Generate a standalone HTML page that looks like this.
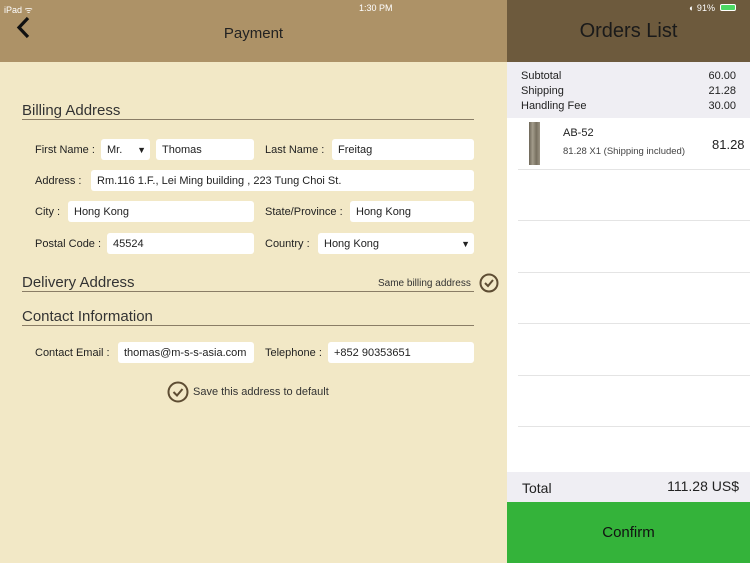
<!DOCTYPE html>
<html><head><meta charset="utf-8"><style>
*{margin:0;padding:0;box-sizing:border-box}
body{width:750px;height:563px;overflow:hidden;position:relative;font-family:"Liberation Sans",sans-serif;background:#f2e8c6;color:#222}
.a{position:absolute}
.lh{left:0;top:0;width:507px;height:62px;background:#ad9267}
.rh{left:507px;top:0;width:243px;height:62px;background:#6d5a3d}
.sb{font-size:9px;color:#fff}
.inp{position:absolute;background:#fff;border-radius:3px;height:21px;font-size:11px;line-height:22px;padding-left:6px;color:#222}
.lbl{position:absolute;font-size:11px;line-height:22px;color:#222}
.sec{position:absolute;left:22px;width:452px;font-size:15px;color:#333;border-bottom:1px solid #8a7d66;height:20px;padding-top:2px}
.sep{position:absolute;left:518px;width:232px;height:1px;background:#e4e4e4}
</style></head><body>
<div class="a lh"></div><div class="a rh"></div>
<div class="a sb" style="left:4px;top:3px">iPad ᯤ</div>
<div class="a sb" style="left:359px;top:3px">1:30 PM</div>
<div class="a sb" style="left:689px;top:3px">◐ 91%</div>
<div class="a" style="left:720px;top:4px;width:16px;height:7px;background:#4cd964;border:1px solid #fff;border-radius:2px"></div>
<svg class="a" style="left:14px;top:16px" width="18" height="24"><path d="M14 2 L5 11.5 L14 21" stroke="#111" stroke-width="3.2" fill="none"/></svg>
<div class="a" style="left:0;width:507px;top:25px;text-align:center;font-size:15px;color:#222">Payment</div>
<div class="a" style="left:507px;width:243px;top:20px;text-align:center;font-size:20px;color:#1a1a1a">Orders List</div>

<div class="sec" style="top:100px">Billing Address</div>
<div class="lbl" style="left:35px;top:139px">First Name :</div>
<div class="inp" style="left:101px;top:139px;width:49px">Mr.<span style="position:absolute;right:4px;font-size:9px">▼</span></div>
<div class="inp" style="left:156px;top:139px;width:98px">Thomas</div>
<div class="lbl" style="left:265px;top:139px">Last Name :</div>
<div class="inp" style="left:332px;top:139px;width:142px">Freitag</div>
<div class="lbl" style="left:35px;top:170px">Address :</div>
<div class="inp" style="left:91px;top:170px;width:383px">Rm.116 1.F., Lei Ming building , 223 Tung Choi St.</div>
<div class="lbl" style="left:35px;top:201px">City :</div>
<div class="inp" style="left:68px;top:201px;width:186px">Hong Kong</div>
<div class="lbl" style="left:265px;top:201px">State/Province :</div>
<div class="inp" style="left:350px;top:201px;width:124px">Hong Kong</div>
<div class="lbl" style="left:35px;top:233px">Postal Code :</div>
<div class="inp" style="left:107px;top:233px;width:147px">45524</div>
<div class="lbl" style="left:265px;top:233px">Country :</div>
<div class="inp" style="left:318px;top:233px;width:156px">Hong Kong<span style="position:absolute;right:4px;font-size:9px">▼</span></div>

<div class="sec" style="top:272px">Delivery Address</div>
<div class="a" style="left:378px;top:278px;font-size:10px;color:#333">Same billing address</div>
<svg class="a" style="left:479px;top:273px" width="20" height="20"><circle cx="10" cy="10" r="8.5" stroke="#5e4d33" stroke-width="2" fill="none"/><path d="M6 10 L9 13 L14 7" stroke="#5e4d33" stroke-width="2" fill="none"/></svg>
<div class="sec" style="top:306px">Contact Information</div>
<div class="lbl" style="left:35px;top:342px">Contact Email :</div>
<div class="inp" style="left:118px;top:342px;width:136px">thomas@m-s-s-asia.com</div>
<div class="lbl" style="left:265px;top:342px">Telephone :</div>
<div class="inp" style="left:328px;top:342px;width:146px">+852 90353651</div>
<svg class="a" style="left:167px;top:381px" width="22" height="22"><circle cx="11" cy="11" r="9.5" stroke="#5e4d33" stroke-width="2" fill="none"/><path d="M6.5 11 L10 14.5 L15.5 8" stroke="#5e4d33" stroke-width="2" fill="none"/></svg>
<div class="a" style="left:193px;top:386px;font-size:11px;color:#333">Save this address to default</div>

<div class="a" style="left:507px;top:62px;width:243px;height:410px;background:#fff"></div>
<div class="a" style="left:507px;top:62px;width:243px;height:56px;background:#efeef3"></div>
<div class="a" style="left:521px;top:69px;font-size:11px;line-height:15px">Subtotal<br>Shipping<br>Handling Fee</div>
<div class="a" style="left:680px;top:69px;width:56px;text-align:right;font-size:11px;line-height:15px">60.00<br>21.28<br>30.00</div>
<div class="a" style="left:529px;top:122px;width:11px;height:43px;background:linear-gradient(90deg,#6d6658,#a39c8b,#777060,#9a9382)"></div>
<div class="a" style="left:563px;top:127px;font-size:11px">AB-52</div>
<div class="a" style="left:563px;top:146px;font-size:9.5px;color:#444">81.28 X1 (Shipping included)</div>
<div class="a" style="left:712px;top:137px;font-size:13px">81.28</div>
<div class="sep" style="top:169px"></div><div class="sep" style="top:220px"></div><div class="sep" style="top:272px"></div><div class="sep" style="top:323px"></div><div class="sep" style="top:375px"></div><div class="sep" style="top:426px"></div>
<div class="a" style="left:507px;top:472px;width:243px;height:30px;background:#efeef3"></div>
<div class="a" style="left:522px;top:480px;font-size:14px">Total</div>
<div class="a" style="left:640px;top:478px;width:99px;text-align:right;font-size:14px">111.28 US$</div>
<div class="a" style="left:507px;top:502px;width:243px;height:61px;background:#34b33a"></div>
<div class="a" style="left:507px;top:524px;width:243px;text-align:center;font-size:15px;color:#111">Confirm</div>
</body></html>
